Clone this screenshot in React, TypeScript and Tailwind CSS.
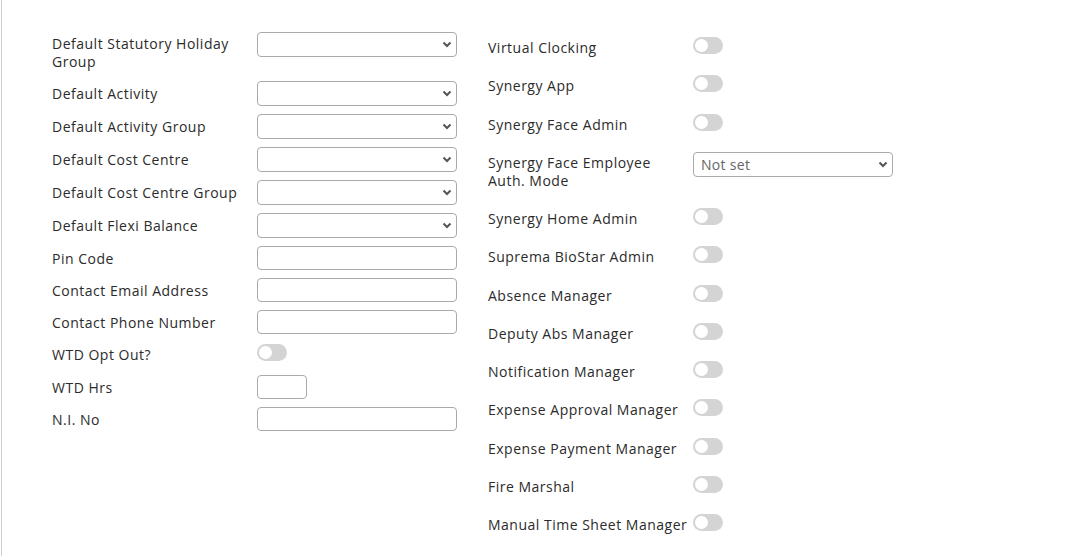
import React from 'react';

const leftRows: { label: string; kind: 'select' | 'input' | 'toggle' | 'small' }[] = [
  { label: 'Default Statutory Holiday Group', kind: 'select' },
  { label: 'Default Activity', kind: 'select' },
  { label: 'Default Activity Group', kind: 'select' },
  { label: 'Default Cost Centre', kind: 'select' },
  { label: 'Default Cost Centre Group', kind: 'select' },
  { label: 'Default Flexi Balance', kind: 'select' },
  { label: 'Pin Code', kind: 'input' },
  { label: 'Contact Email Address', kind: 'input' },
  { label: 'Contact Phone Number', kind: 'input' },
  { label: 'WTD Opt Out?', kind: 'toggle' },
  { label: 'WTD Hrs', kind: 'small' },
  { label: 'N.I. No', kind: 'input' },
];

const rightRows: { label: string; select?: string }[] = [
  { label: 'Virtual Clocking' },
  { label: 'Synergy App' },
  { label: 'Synergy Face Admin' },
  { label: 'Synergy Face Employee Auth. Mode', select: 'Not set' },
  { label: 'Synergy Home Admin' },
  { label: 'Suprema BioStar Admin' },
  { label: 'Absence Manager' },
  { label: 'Deputy Abs Manager' },
  { label: 'Notification Manager' },
  { label: 'Expense Approval Manager' },
  { label: 'Expense Payment Manager' },
  { label: 'Fire Marshal' },
  { label: 'Manual Time Sheet Manager' },
];

function Chevron() {
  return (
    <svg className="absolute right-[5px] top-[9px] pointer-events-none" width="10" height="7" viewBox="0 0 10 7">
      <polyline points="1.5,1.5 5,5 8.5,1.5" fill="none" stroke="#555" strokeWidth="2" />
    </svg>
  );
}

function SelectBox({ value }: { value?: string }) {
  return (
    <div className="relative w-[200px] h-[25px]">
      <select className="appearance-none w-full h-full border border-[#aaa] rounded-[4px] bg-white pl-[7px] text-[14px] text-[#666] tracking-[0.3px] outline-none">
        <option>{value ?? ''}</option>
      </select>
      <Chevron />
    </div>
  );
}

function Toggle() {
  return (
    <div className="w-[30px] h-[17px] rounded-full bg-[#d4d4d4] relative">
      <div className="absolute left-[2px] top-[2px] w-[13px] h-[13px] rounded-full bg-white" />
    </div>
  );
}

export default function App() {
  return (
    <div
      className="min-h-[556px] bg-white border-l border-[#cfcfcf] ml-[1px] text-[14px] text-[#2b2b2b] tracking-[0.5px]"
      style={{ fontFamily: '"Open Sans", sans-serif' }}
    >
      <div className="flex gap-[31px] pl-[50px] pt-[32px]">
        {/* Left column */}
        <div className="grid grid-cols-[205px_200px] gap-y-[8px] content-start">
          {leftRows.map((r, i) => (
            <React.Fragment key={i}>
              <div className={`${i === 0 ? 'pt-[3px] pb-[2px]' : 'pt-[4px] pb-[1px]'} leading-[18px] pr-[6px]`}>{r.label}</div>
              <div>
                {r.kind === 'select' && <SelectBox />}
                {r.kind === 'input' && (
                  <input className="w-[200px] h-[24px] border border-[#aaa] rounded-[4px] outline-none" />
                )}
                {r.kind === 'small' && (
                  <input className="w-[50px] h-[24px] border border-[#aaa] rounded-[4px] outline-none" />
                )}
                {r.kind === 'toggle' && (
                  <div className="h-[25px] pt-[2px]">
                    <Toggle />
                  </div>
                )}
              </div>
            </React.Fragment>
          ))}
        </div>

        {/* Right column */}
        <div className="grid grid-cols-[205px_200px] gap-y-[8.25px] content-start pt-[5px]">
          {rightRows.map((r, i) => (
            <React.Fragment key={i}>
              <div className="pt-[2px] pb-[10px] leading-[18px] pr-[2px]">{r.label}</div>
              <div>{r.select ? <SelectBox value={r.select} /> : <Toggle />}</div>
            </React.Fragment>
          ))}
        </div>
      </div>
    </div>
  );
}
